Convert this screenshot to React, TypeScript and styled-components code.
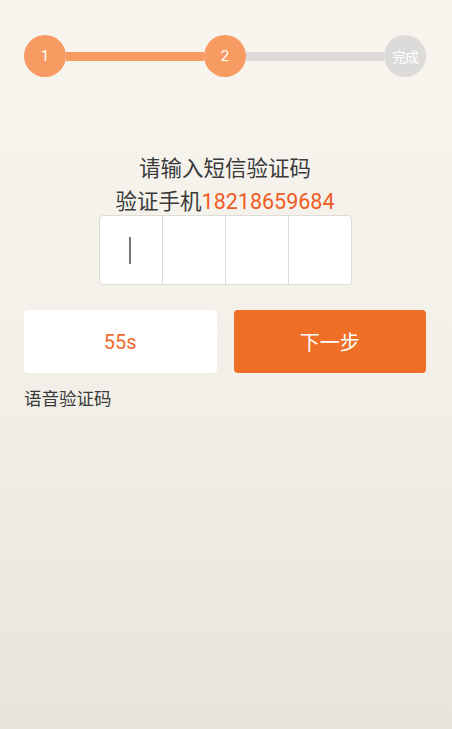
import styled, { createGlobalStyle } from 'styled-components';

const GlobalStyle = createGlobalStyle`
  html, body {
    margin: 0;
    padding: 0;
  }
  body {
    font-family: Roboto, "Noto Sans CJK SC", "Noto Sans", sans-serif;
  }
`;

const Page = styled.div`
  width: 452px;
  height: 729px;
  background: linear-gradient(to bottom, #f8f5ef 0%, #f3f0e9 50%, #e7e4dd 100%);
  padding: 35px 26px 0 24px;
  box-sizing: border-box;
  display: flex;
  flex-direction: column;
`;

const Steps = styled.div`
  display: flex;
  align-items: center;
`;

const Circle = styled.div<{ active: boolean }>`
  width: 42px;
  height: 42px;
  border-radius: 50%;
  flex-shrink: 0;
  background: ${({ active }) => (active ? '#f89b62' : '#dcdbd9')};
  color: #fff;
  display: flex;
  align-items: center;
  justify-content: center;
  font-size: 15px;
`;

const SmallLabel = styled.span`
  font-size: 14px;
  letter-spacing: -1px;
`;

const Line = styled.div<{ active: boolean }>`
  flex: 1;
  height: 9px;
  background: ${({ active }) => (active ? '#f89b62' : '#dcdbd9')};
`;

const Heading = styled.div`
  margin-top: 75px;
  text-align: center;
  font-size: 21.5px;
  line-height: 33px;
  color: #3a3a3a;
`;

const Phone = styled.span`
  color: #ef5b24;
`;

const CodeRow = styled.div`
  align-self: center;
  margin-top: -3px;
  margin-left: 1px;
  display: flex;
  background: #fff;
  border: 1px solid #dedcd8;
  border-radius: 4px;
  overflow: hidden;
`;

const CodeCell = styled.div`
  width: 62px;
  height: 68px;
  display: flex;
  align-items: center;
  justify-content: center;
  & + & {
    border-left: 1px solid #dedcd8;
  }
`;

const Caret = styled.div`
  width: 2px;
  height: 27px;
  background: #777;
  margin-right: 2px;
`;

const Buttons = styled.div`
  margin-top: 25px;
  display: grid;
  grid-template-columns: 1fr 1fr;
  gap: 17px;
`;

const Button = styled.button<{ primary?: boolean }>`
  height: 63px;
  border: none;
  border-radius: 4px;
  outline: none;
  font-family: inherit;
  font-size: 20px;
  background: ${({ primary }) => (primary ? '#ef6f26' : '#fff')};
  color: ${({ primary }) => (primary ? '#fff' : '#f0692b')};
`;

const VoiceLink = styled.div`
  margin-top: 13px;
  font-size: 17.5px;
  line-height: 26px;
  color: #3a3a3a;
`;

export default function App() {
  return (
    <>
      <GlobalStyle />
      <Page>
        <Steps>
          <Circle active>1</Circle>
          <Line active />
          <Circle active>2</Circle>
          <Line active={false} />
          <Circle active={false}>
            <SmallLabel>完成</SmallLabel>
          </Circle>
        </Steps>
        <Heading>
          请输入短信验证码
          <br />
          验证手机<Phone>18218659684</Phone>
        </Heading>
        <CodeRow>
          <CodeCell>
            <Caret />
          </CodeCell>
          <CodeCell />
          <CodeCell />
          <CodeCell />
        </CodeRow>
        <Buttons>
          <Button>55s</Button>
          <Button primary>下一步</Button>
        </Buttons>
        <VoiceLink>语音验证码</VoiceLink>
      </Page>
    </>
  );
}
